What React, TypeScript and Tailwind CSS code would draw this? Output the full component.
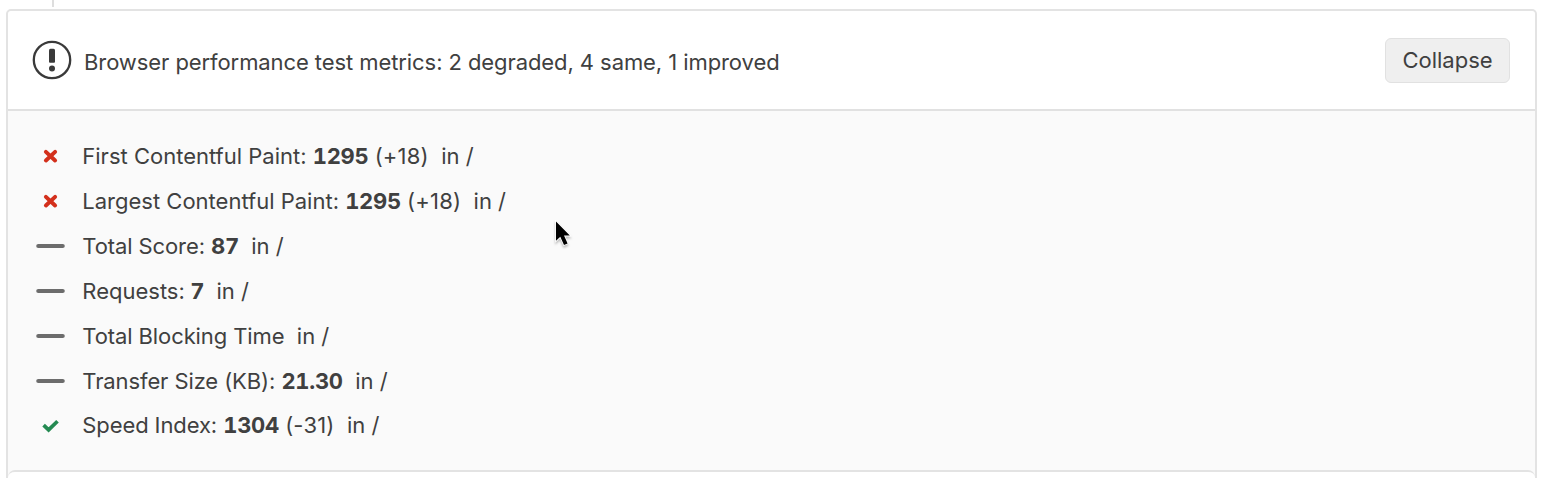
import type { ReactNode } from "react";

type Status = "degraded" | "same" | "improved";

interface Metric {
  status: Status;
  label: string;
  value?: string;
  delta?: string;
  tight?: boolean;
}

const metrics: Metric[] = [
  { status: "degraded", label: "First Contentful Paint:", value: "1295", delta: "(+18)" },
  { status: "degraded", label: "Largest Contentful Paint:", value: "1295", delta: "(+18)" },
  { status: "same", label: "Total Score:", value: "87", tight: true },
  { status: "same", label: "Requests:", value: "7" },
  { status: "same", label: "Total Blocking Time", tight: true },
  { status: "same", label: "Transfer Size (KB):", value: "21.30", tight: true },
  { status: "improved", label: "Speed Index:", value: "1304", delta: "(-31)", tight: true },
];

const shapes: Record<Status, ReactNode> = {
  degraded: (
    <path d="M10.9 10.9 20.1 19.5M20.1 10.9 10.9 19.5" stroke="#d3301c" strokeWidth="4" strokeLinecap="round" />
  ),
  same: <path d="M3.3 15H27.7" stroke="#6c6c6c" strokeWidth="4.2" strokeLinecap="round" />,
  improved: <path d="M8.6 15.1 13.6 19.9 22.5 11.2" stroke="#248a52" strokeWidth="3.7" />,
};

function StatusIcon({ status }: { status: Status }) {
  return (
    <svg className="h-[30px] w-[30px] shrink-0" viewBox="0 0 30 30" fill="none">
      {shapes[status]}
    </svg>
  );
}

function MetricRow({ status, label, value, delta, tight }: Metric) {
  return (
    <li className="flex h-[44.85px] items-center">
      <StatusIcon status={status} />
      <span className="ml-[17.3px] whitespace-pre">
        <span className={tight ? "tracking-[-0.1px]" : "tracking-normal"}>{label}</span>
        {value && <> <strong className={value.length > 3 ? "font-bold tracking-[-0.3px] tabular-nums" : "font-bold tracking-[0.3px]"}>{value}</strong></>}
        {delta && <> <span className="tracking-[0.2px]">{delta}</span></>}
        {"  in /"}
      </span>
    </li>
  );
}

export default function App() {
  return (
    <div className="relative h-[478px] overflow-hidden bg-white font-['Inter',sans-serif] text-[22px] leading-[30px] text-[#404040]">
      <div className="ml-[52px] h-[7px] w-[1.5px] bg-[#dedede]" />
      <section className="mt-[2px] mr-[7px] ml-[6px] flex h-[480px] flex-col rounded-t-[5px] border-2 border-[#e3e3e3] bg-[#fafafa]">
        <header className="flex h-[100px] shrink-0 items-center rounded-t-[4px] border-b-2 border-[#e1e1e1] bg-white pr-[25px] pb-px pl-[24px]">
          <svg className="h-[40px] w-[40px] shrink-0" viewBox="0 0 40 40" fill="none">
            <circle cx="20" cy="20" r="18.2" stroke="#3a3a3a" strokeWidth="2.3" />
            <path d="M17 10.3a1.5 1.5 0 0 1 1.5-1.5h3a1.5 1.5 0 0 1 1.5 1.5v11.4a1 1 0 0 1-1 1h-4a1 1 0 0 1-1-1Z" fill="#3a3a3a" />
            <circle cx="20" cy="28.5" r="3" fill="#3a3a3a" />
          </svg>
          <span className="ml-[12px] pt-[4px] tracking-[-0.08px]">
            Browser performance test metrics: 2 degraded, 4 same, 1 improved
          </span>
          <button className="mt-px ml-auto h-[45px] w-[125px] rounded-[6px] border border-[#e1e1e1] bg-[#efefef] pb-px">
            Collapse
          </button>
        </header>
        <ul className="h-[359px] shrink-0 pt-[23px] pl-[27px]">
          {metrics.map((metric) => (
            <MetricRow key={metric.label} {...metric} />
          ))}
        </ul>
        <div className="h-[20px] shrink-0 rounded-t-[7px] border-t-2 border-[#e3e3e3] bg-white" />
      </section>
      <svg
        className="absolute top-[218px] left-[551px] h-[32px] w-[24px] drop-shadow-[0_2px_1px_rgba(0,0,0,0.25)]"
        viewBox="0 0 24 32"
      >
        <path
          d="M5 3.5V22.8L9.3 18.8 13 27 16.6 25.4 13 17.6H18.8Z"
          fill="#000"
          stroke="#fff"
          strokeWidth="1.6"
          paintOrder="stroke"
        />
      </svg>
    </div>
  );
}
